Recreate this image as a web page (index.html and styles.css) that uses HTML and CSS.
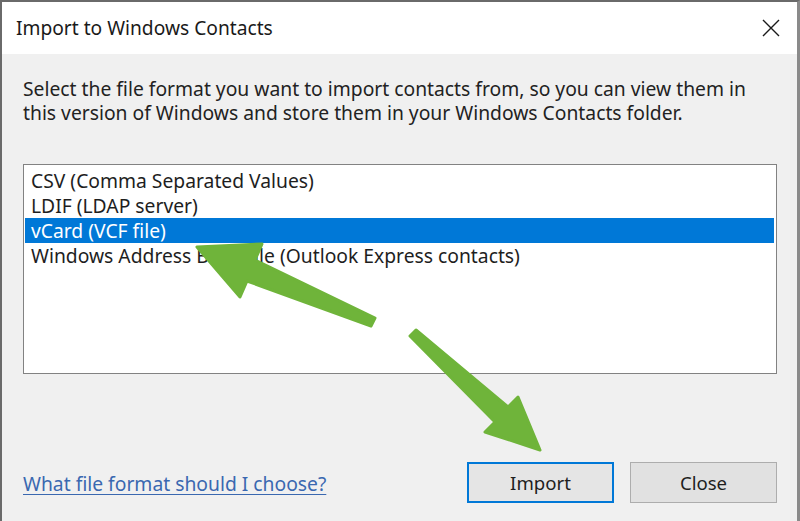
FILE: index.html
```html
<!DOCTYPE html>
<html>
<head>
<meta charset="utf-8">
<link rel="stylesheet" href="styles.css">
</head>
<body>
<div class="window">
  <div class="titlebar">
    <span class="title">Import to Windows Contacts</span>
    <svg class="close" width="18" height="18" viewBox="0 0 18 18"><path d="M1 1L17 17M17 1L1 17" stroke="#1a1a1a" stroke-width="1.4" fill="none"/></svg>
  </div>
  <div class="content">
    <p class="desc">Select the file format you want to import contacts from, so you can view them in this version of Windows and store them in your Windows Contacts folder.</p>
    <div class="listbox">
      <div class="item">CSV (Comma Separated Values)</div>
      <div class="item">LDIF (LDAP server)</div>
      <div class="item selected">vCard (VCF file)</div>
      <div class="item">Windows Address Book file (Outlook Express contacts)</div>
    </div>
    <div class="footer">
      <a class="link" href="#">What file format should I choose?</a>
      <div class="buttons">
        <button class="btn primary">Import</button>
        <button class="btn">Close</button>
      </div>
    </div>
  </div>
  <svg class="arrows" width="800" height="521" viewBox="0 0 800 521">
    <g fill="#6fb43a" stroke="#6fb43a" stroke-width="3" stroke-linejoin="round">
      <polygon points="197,247 262,244 255,260 375,318 371,326 247,281 240,297"/>
      <polygon points="540,450 485,432 495,422 410,336 416,330 508,407 518,397"/>
    </g>
  </svg>
</div>
</body>
</html>
```
FILE: styles.css
```css
* { box-sizing: border-box; }
html, body { margin: 0; padding: 0; }
body { width: 800px; height: 521px; overflow: hidden; background: #f0f0f0; }
.window {
  position: relative;
  width: 800px;
  height: 521px;
  border-top: 2px solid #6a6a6a;
  border-left: 2px solid #6a6a6a;
  border-right: 3px solid #8a8a8a;
  background: #f0f0f0;
  font-family: "Noto Sans", "Open Sans", sans-serif;
  color: #1e1e1e;
  display: flex;
  flex-direction: column;
}
.titlebar {
  height: 52px;
  background: #ffffff;
  display: flex;
  align-items: center;
  justify-content: space-between;
  padding: 0 17px 0 14px;
  flex-shrink: 0;
}
.title { font-size: 19.2px; color: #1a1a1a; margin-top: -2px; }
.close { margin-top: -1px; }
.content {
  flex: 1;
  padding: 0 20px 0 21px;
  display: flex;
  flex-direction: column;
}
.desc {
  margin: 23px 0 0 0;
  font-size: 19.3px;
  line-height: 24px;
  color: #222;
}
.listbox {
  margin-top: 39px;
  height: 210px;
  width: 754px;
  background: #fff;
  border: 1px solid #828282;
  padding: 3px 2px 0 1px;
  font-size: 19.3px;
}
.item {
  height: 25px;
  line-height: 25px;
  padding-left: 6px;
  color: #1e1e1e;
  white-space: nowrap;
}
.item.selected { background: #0078d7; color: #fff; }
.footer {
  margin-top: 88px;
  display: flex;
  align-items: center;
  justify-content: space-between;
  width: 754px;
}
.link {
  color: #3a68b0;
  font-size: 19.3px;
  text-decoration: underline;
  text-underline-offset: 3px;
  margin-top: 2px;
}
.buttons { display: flex; gap: 16px; }
.btn {
  font-family: inherit;
  font-size: 18.6px;
  color: #1e1e1e;
  width: 147px;
  height: 41px;
  background: #e1e1e1;
  border: 1px solid #adadad;
  padding: 0;
}
.btn.primary { border: 2px solid #0078d7; background: #e5e5e5; }
.arrows { position: absolute; left: -2px; top: -2px; pointer-events: none; }
```
